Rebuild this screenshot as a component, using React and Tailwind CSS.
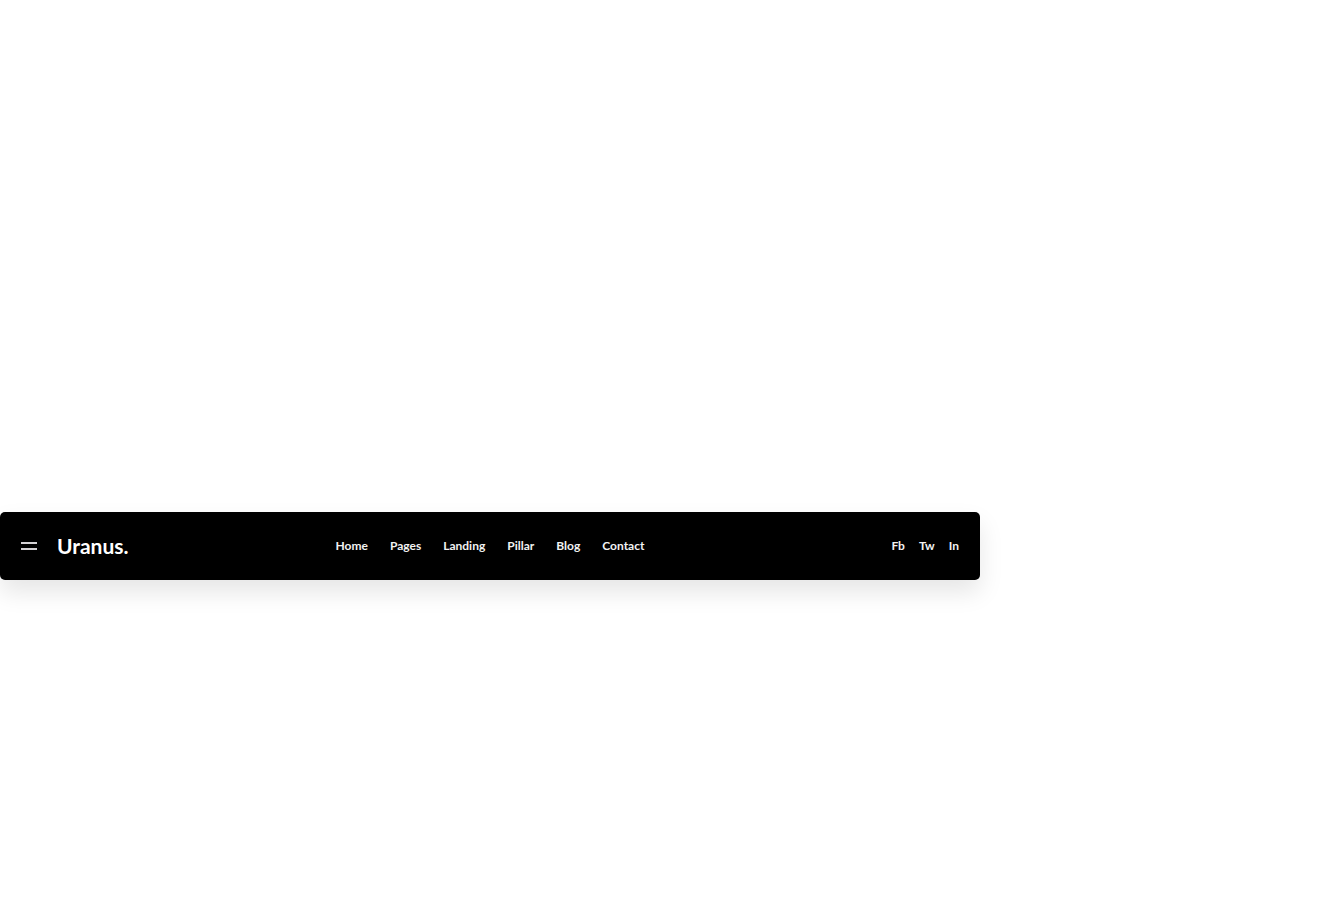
const pages = ['Home', 'Pages', 'Landing', 'Pillar', 'Blog', 'Contact'];

const socials = [
  { label: 'Fb', name: 'Facebook' },
  { label: 'Tw', name: 'Twitter' },
  { label: 'In', name: 'Instagram' },
];

export default function App() {
  return (
    <main className="min-h-screen bg-white pt-128 font-['Lato',sans-serif]">
      <header className="grid w-full max-w-[980px] grid-cols-[1fr_auto_1fr] items-center rounded-[5px] bg-black px-[21px] py-5 text-[#f2f2f2] shadow-[0_12px_24px_rgba(0,0,0,0.1)]">
        <div className="flex items-center gap-5">
          <button type="button" aria-label="Open menu" className="flex w-4 flex-col gap-1">
            <span className="h-0.5 w-full bg-[#d4d2d5]" />
            <span className="h-0.5 w-full bg-[#d4d2d5]" />
          </button>
          <a href="#" className="text-[21px] leading-7 font-bold text-white">
            Uranus.
          </a>
        </div>
        <nav aria-label="Main" className="flex gap-[22px] text-xs leading-5 font-bold">
          {pages.map((page) => (
            <a key={page} href="#">
              {page}
            </a>
          ))}
        </nav>
        <nav aria-label="Social" className="flex justify-end gap-3.5 text-xs leading-5 font-bold">
          {socials.map((social) => (
            <a key={social.label} href="#" title={social.name}>
              {social.label}
            </a>
          ))}
        </nav>
      </header>
    </main>
  );
}
